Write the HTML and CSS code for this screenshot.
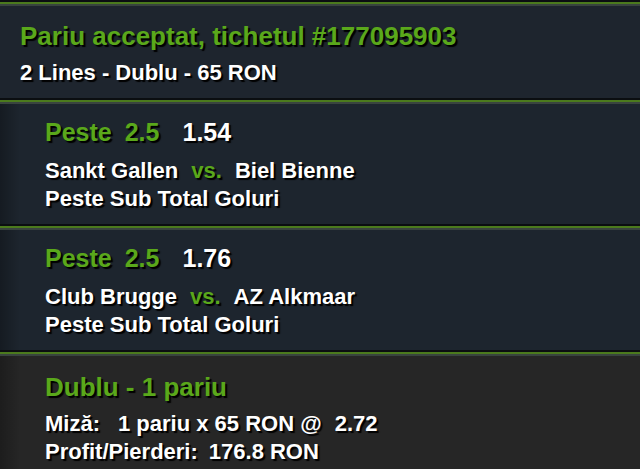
FILE: index.html
```html
<!DOCTYPE html>
<html>

<head>
    <meta content="text/html; charset=utf-8" http-equiv="Content-Type">
    <title>Pariu acceptat</title>
    <link rel="stylesheet" href="styles.css">
</head>

<body>
    <div class="sep"></div>
    <div class="ticketHead">
        <div class="ticketTitle">Pariu acceptat, tichetul #177095903</div>
        <div class="ticketSub">2 Lines - Dublu - 65 RON</div>
    </div>
    <div class="sep"></div>
    <div class="betLine">
        <div class="betPick"><span class="green">Peste</span><span class="green gapM">2.5</span><span class="odds">1.54</span></div>
        <div class="betText">Sankt Gallen<span class="green vs">vs.</span>Biel Bienne</div>
        <div class="betText">Peste Sub Total Goluri</div>
    </div>
    <div class="sep"></div>
    <div class="betLine">
        <div class="betPick"><span class="green">Peste</span><span class="green gapM">2.5</span><span class="odds">1.76</span></div>
        <div class="betText">Club Brugge<span class="green vs">vs.</span>AZ Alkmaar</div>
        <div class="betText">Peste Sub Total Goluri</div>
    </div>
    <div class="sep"></div>
    <div class="summary">
        <div class="sumTitle green">Dublu - 1 pariu</div>
        <div class="betText">Miză:<span class="gapL">1 pariu x 65 RON @</span><span class="gapM">2.72</span></div>
        <div class="betText sumSecond">Profit/Pierderi:<span class="gapS">176.8 RON</span></div>
    </div>
</body>

</html>
```

FILE: styles.css
```css
body {
    margin: 0;
    background: #252525;
    font-family: "Liberation Sans", Arial, sans-serif;
    font-weight: bold;
    color: #ffffff;
    text-shadow: 2px 2px 1px #000000;
    overflow: hidden;
}

.sep {
    height: 2px;
    background: #4b7a1d;
    border-top: 2px solid #0b0e11;
    border-bottom: 2px solid #39443f;
}

.green {
    color: #5aa81b;
}

.ticketHead {
    background: #1e252e;
    padding: 14px 20px 12px 20px;
}

.ticketTitle {
    font-size: 26px;
    line-height: 32px;
    color: #5aa81b;
}

.ticketSub {
    margin-top: 8px;
    font-size: 22px;
    line-height: 26px;
}

.betLine {
    background: linear-gradient(to right, rgba(0, 0, 0, 0.28), rgba(0, 0, 0, 0) 20px), #1d252e;
    padding: 13px 45px 11px 45px;
}

.summary {
    background: linear-gradient(to right, rgba(0, 0, 0, 0.25), rgba(0, 0, 0, 0) 20px), #262626;
    padding: 16px 45px 10px 45px;
}

.betPick {
    font-size: 25px;
    line-height: 30px;
    margin-bottom: 10px;
}

.sumTitle {
    font-size: 26px;
    line-height: 30px;
    margin-bottom: 8px;
}

.betText {
    font-size: 22px;
    line-height: 28px;
}

.sumSecond {
    line-height: 27px;
}

.gapS {
    margin-left: 11px;
}

.gapM {
    margin-left: 13px;
}

.gapL {
    margin-left: 18px;
}

.odds {
    margin-left: 23px;
    color: #ffffff;
}

.vs {
    margin: 0 13px;
}
```
